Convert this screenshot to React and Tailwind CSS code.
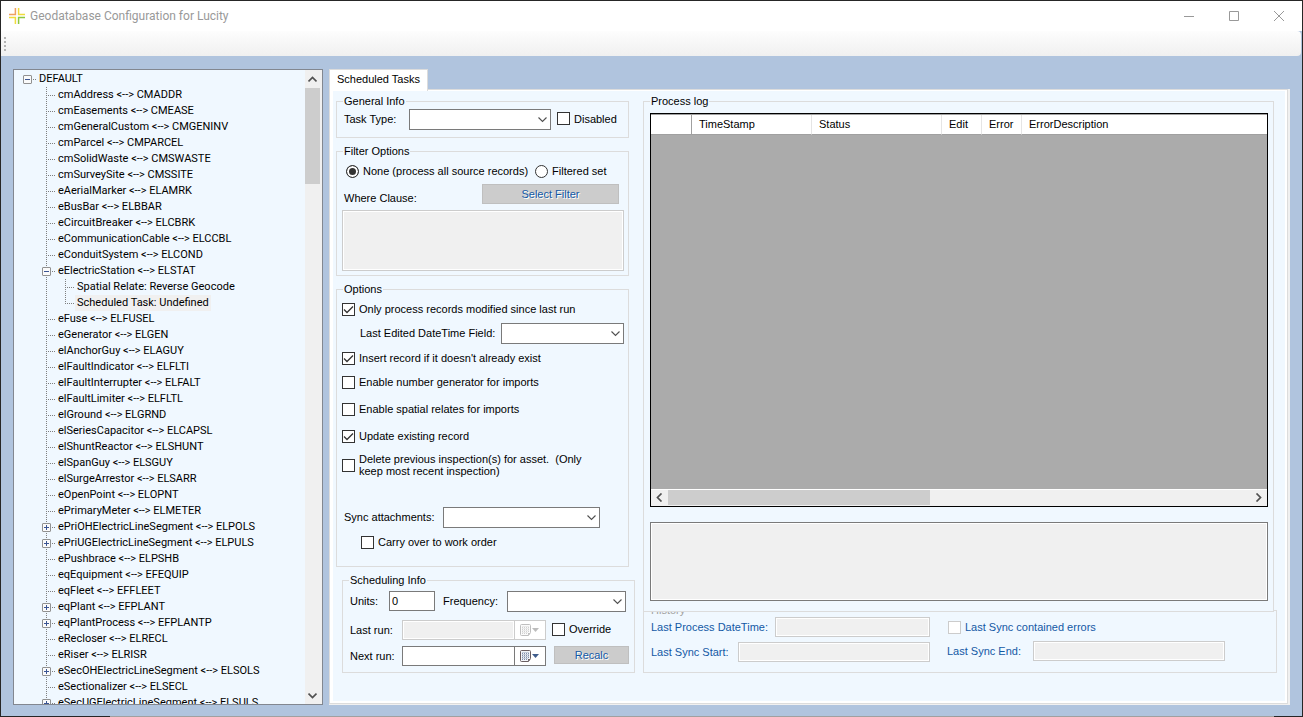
import React from 'react';

const TREE = [
  ['cmAddress <--> CMADDR'],
  ['cmEasements <--> CMEASE'],
  ['cmGeneralCustom <--> CMGENINV'],
  ['cmParcel <--> CMPARCEL'],
  ['cmSolidWaste <--> CMSWASTE'],
  ['cmSurveySite <--> CMSSITE'],
  ['eAerialMarker <--> ELAMRK'],
  ['eBusBar <--> ELBBAR'],
  ['eCircuitBreaker <--> ELCBRK'],
  ['eCommunicationCable <--> ELCCBL'],
  ['eConduitSystem <--> ELCOND'],
  ['eElectricStation <--> ELSTAT', 'open', ['Spatial Relate: Reverse Geocode', 'Scheduled Task: Undefined']],
  ['eFuse <--> ELFUSEL'],
  ['eGenerator <--> ELGEN'],
  ['elAnchorGuy <--> ELAGUY'],
  ['elFaultIndicator <--> ELFLTI'],
  ['elFaultInterrupter <--> ELFALT'],
  ['elFaultLimiter <--> ELFLTL'],
  ['elGround <--> ELGRND'],
  ['elSeriesCapacitor <--> ELCAPSL'],
  ['elShuntReactor <--> ELSHUNT'],
  ['elSpanGuy <--> ELSGUY'],
  ['elSurgeArrestor <--> ELSARR'],
  ['eOpenPoint <--> ELOPNT'],
  ['ePrimaryMeter <--> ELMETER'],
  ['ePriOHElectricLineSegment <--> ELPOLS', 'closed'],
  ['ePriUGElectricLineSegment <--> ELPULS', 'closed'],
  ['ePushbrace <--> ELPSHB'],
  ['eqEquipment <--> EFEQUIP'],
  ['eqFleet <--> EFFLEET'],
  ['eqPlant <--> EFPLANT', 'closed'],
  ['eqPlantProcess <--> EFPLANTP', 'closed'],
  ['eRecloser <--> ELRECL'],
  ['eRiser <--> ELRISR'],
  ['eSecOHElectricLineSegment <--> ELSOLS', 'closed'],
  ['eSectionalizer <--> ELSECL'],
  ['eSecUGElectricLineSegment <--> ELSULS', 'closed'],
];

function Dots({ up = true, down = true, across = true }) {
  return (
    <svg width="14" height="16" viewBox="0 0 14 16" className="shrink-0" fill="none" stroke="#7f7f7f" strokeDasharray="1 1" aria-hidden="true">
      {up && <path d="M4.5 0V8" />}
      {down && <path d="M4.5 8V16" />}
      {across && <path d="M4 8.5H14" />}
    </svg>
  );
}

function Toggle({ open, label, root }) {
  return (
    <button type="button" aria-label={(open ? 'Collapse ' : 'Expand ') + label} className="shrink-0">
      <svg width="14" height="16" viewBox="0 0 14 16" fill="none" className="block">
        {!root && <path d="M4.5 0V16" stroke="#7f7f7f" strokeDasharray="1 1" />}
        <path d="M10 8.5H14" stroke="#7f7f7f" strokeDasharray="1 1" />
        <rect x="0.5" y="4.5" width="8" height="8" rx="0.5" fill="#fafafa" stroke="#919191" />
        <path d="M2 8.5H7" stroke="#3b5593" />
        {!open && <path d="M4.5 6V11" stroke="#3b5593" />}
      </svg>
    </button>
  );
}

function Tree() {
  return (
    <ul className="min-w-0 flex-1 overflow-hidden pt-px pl-[9px] font-[Roboto,sans-serif] leading-4 whitespace-nowrap">
      <li>
        <div className="flex h-4">
          <Toggle open root label="DEFAULT" />
          <span className="px-0.5">DEFAULT</span>
        </div>
        <ul className="pl-[19px]">
          {TREE.map(([name, state, kids]) => (
            <li key={name}>
              <div className="flex h-4">
                {state ? <Toggle open={state === 'open'} label={name} /> : <Dots />}
                <span className="px-0.5">{name}</span>
              </div>
              {kids && (
                <ul>
                  {kids.map((kid, i) => (
                    <li key={kid} className="flex h-4">
                      <Dots across={false} />
                      <span className="w-[5px]" />
                      <Dots down={i < kids.length - 1} />
                      <span className={i === 1 ? 'bg-[#f0f0f0] px-0.5' : 'px-0.5'}>{kid}</span>
                    </li>
                  ))}
                </ul>
              )}
            </li>
          ))}
        </ul>
      </li>
    </ul>
  );
}

function Arrow({ d }) {
  return (
    <svg width="9" height="9" viewBox="0 0 9 9" fill="none" stroke="#505050" strokeWidth="1.7" aria-hidden="true">
      <path d={d} />
    </svg>
  );
}

function Group({ title, className = '', children }) {
  return (
    <fieldset className={'border border-[#dcdcdc] ' + className}>
      <legend className="ml-[6px] px-px leading-[13px]">{title}</legend>
      {children}
    </fieldset>
  );
}

function Check({ label, className = '', checked = false, disabled = false }) {
  return (
    <label className={'flex items-center gap-1 leading-3 ' + className}>
      <span className="relative size-[13px] shrink-0">
        <input
          type="checkbox"
          defaultChecked={checked}
          disabled={disabled}
          className="peer block size-[13px] appearance-none border border-[#333] bg-white disabled:border-[#ccc]"
        />
        <svg viewBox="0 0 13 13" className="pointer-events-none absolute inset-0 hidden size-[13px] peer-checked:block" fill="none" stroke="#333" strokeWidth="1.3" aria-hidden="true">
          <path d="M2 6.5L5 9.5L11 3.5" />
        </svg>
      </span>
      <span>{label}</span>
    </label>
  );
}

function Radio({ label, checked }) {
  return (
    <label className="flex items-center gap-1">
      <input
        type="radio"
        name="filter"
        defaultChecked={checked}
        className="size-[13px] shrink-0 appearance-none rounded-full border border-[#333] bg-white checked:bg-[#333] checked:shadow-[inset_0_0_0_2px_#fff]"
      />
      {label}
    </label>
  );
}

function Select({ id, className }) {
  return (
    <span className={'relative h-[21px] shrink-0 ' + className}>
      <select id={id} className="block h-full w-full appearance-none border border-[#7a7a7a] bg-white px-1">
        <option></option>
      </select>
      <svg width="9" height="6" viewBox="0 0 9 6" className="pointer-events-none absolute top-[8px] right-[4px]" fill="none" stroke="#505050" strokeWidth="1.1" aria-hidden="true">
        <path d="M0.5 0.5L4.5 4.5L8.5 0.5" />
      </svg>
    </span>
  );
}

function DatePick({ id, disabled = false }) {
  return (
    <span className={'flex h-5 w-36 shrink-0 border bg-white ' + (disabled ? 'border-[#ccc]' : 'border-[#7a7a7a]')}>
      <input id={id} disabled={disabled} className="m-px min-w-0 flex-1 bg-white px-0.5 disabled:bg-[#f0f0f0]" />
      <button
        type="button"
        aria-label="Open calendar"
        disabled={disabled}
        className={'w-[31px] border-l pl-1 ' + (disabled ? 'border-[#ccc]' : 'border-[#7a7a7a]')}
      >
        <svg width="22" height="14" viewBox="0 0 22 14" fill="none" className={disabled ? 'block opacity-40 grayscale' : 'block'}>
          <path d="M2.5 1.5H10.5Q11.5 1.5 11.5 2.5V9.5L9.5 12.5H2.5Q1.5 12.5 1.5 11.5V2.5Q1.5 1.5 2.5 1.5Z" fill="#f4f6fa" stroke="#6b5f62" />
          <path d="M3 4.5H10M3 6.5H10M3 8.5H10M3 10.5H9" stroke="#8290ad" strokeDasharray="1 1" />
          <path d="M3 3.5H10M3 5.5H10M3 7.5H10M3 9.5H9" stroke="#c5ccda" />
          <path d="M9 12.5V10H11.5Z" fill="#6b5f62" />
          <path d="M13 5H20L16.5 9Z" fill="#3f5d8c" />
        </svg>
      </button>
    </span>
  );
}

const flatButton = 'border border-[#bfbfbf] bg-[#ccc] text-center text-[#1359a5] [text-shadow:1px_1px_0_#fff]';
const dimField = 'border border-[#ccc] bg-[#f0f0f0] shadow-[inset_0_0_0_1px_#fff]';

function Titlebar() {
  return (
    <header className="flex h-[30px] shrink-0 items-center bg-white pl-2">
      <svg width="16" height="16" viewBox="0 0 16 16" fill="none" strokeWidth="1.5" aria-hidden="true">
        <path d="M0 6.4H6.4V0" stroke="#f0a060" />
        <path d="M9.6 0V6.4H16" stroke="#f0dc3c" />
        <path d="M0 9.6H6.4V16" stroke="#f0dc3c" />
        <path d="M9.6 16V9.6H16" stroke="#8cc63f" />
      </svg>
      <h1 className="ml-[5px] flex-1 font-[Roboto,sans-serif] text-xs text-[#999]">Geodatabase Configuration for Lucity</h1>
      <div className="flex text-[#999]">
        <button type="button" aria-label="Minimize" className="flex h-[30px] w-[45px] items-center justify-center">
          <svg width="10" height="10" viewBox="0 0 10 10" stroke="currentColor"><path d="M0 5.5H10" /></svg>
        </button>
        <button type="button" aria-label="Maximize" className="flex h-[30px] w-[45px] items-center justify-center">
          <svg width="10" height="10" viewBox="0 0 10 10" fill="none" stroke="currentColor"><path d="M0.5 0.5H9.5V9.5H0.5Z" /></svg>
        </button>
        <button type="button" aria-label="Close" className="flex h-[30px] w-[46px] items-center justify-center">
          <svg width="10" height="10" viewBox="0 0 10 10" stroke="currentColor"><path d="M0 0L10 10M10 0L0 10" /></svg>
        </button>
      </div>
    </header>
  );
}

function TaskForm() {
  return (
    <div className="flex w-[307px] shrink-0 flex-col gap-[7px]">
      <Group title="General Info" className="mr-[14px] h-[43px]">
        <div className="mt-px flex items-center pl-[7px]">
          <label htmlFor="task-type" className="w-[65px]">Task Type:</label>
          <Select id="task-type" className="w-[142px]" />
          <Check label="Disabled" className="mb-0.5 ml-[6px]" />
        </div>
      </Group>

      <Group title="Filter Options" className="mr-[14px] h-[131px]">
        <div className="mt-1 flex h-[18px] items-center gap-[7px] pl-[9px]">
          <Radio label="None (process all source records)" checked />
          <Radio label="Filtered set" />
        </div>
        <div className="mt-1 flex items-end justify-between pr-[9px] pl-[7px]">
          <label htmlFor="where" className="leading-3">Where Clause:</label>
          <button type="button" disabled className={'h-5 w-[137px] ' + flatButton}>Select Filter</button>
        </div>
        <div className="mt-[6px] pr-1 pl-[5px]">
          <textarea id="where" disabled className={'block h-[61px] w-full resize-none ' + dimField} />
        </div>
      </Group>

      <Group title="Options" className="mr-[14px] h-[284px]">
        <div className="flex flex-col pt-[6px] pr-1 pl-[5px]">
          <Check label="Only process records modified since last run" checked className="h-[14px]" />
          <div className="mt-[7px] flex items-center justify-between pl-[18px]">
            <label htmlFor="edited-field">Last Edited DateTime Field:</label>
            <Select id="edited-field" className="w-[123px]" />
          </div>
          <Check label="Insert record if it doesn't already exist" checked className="mt-[7px] h-[14px]" />
          <Check label="Enable number generator for imports" className="mt-[10px] h-[14px]" />
          <Check label="Enable spatial relates for imports" className="mt-[13px] h-[14px]" />
          <Check label="Update existing record" checked className="mt-[13px] h-[14px]" />
          <Check
            label={'Delete previous inspection(s) for asset.\u00a0 (Only keep most recent inspection)'}
            className="mt-[10px] h-6 w-[256px]"
          />
          <div className="mt-[30px] flex items-center pl-0.5">
            <label htmlFor="sync" className="w-[99px]">Sync attachments:</label>
            <Select id="sync" className="w-[157px]" />
          </div>
          <Check label="Carry over to work order" className="mt-[7px] ml-[19px] h-[14px]" />
        </div>
      </Group>

      <Group title="Scheduling Info" className="mr-2 ml-[6px] h-[99px]">
        <div className="mt-1 flex items-start pl-[7px] leading-5">
          <label htmlFor="units" className="w-[39px]">Units:</label>
          <input id="units" defaultValue="0" className="h-5 w-[46px] border border-[#7a7a7a] bg-white px-0.5" />
          <label htmlFor="frequency" className="w-[72px] pl-2">Frequency:</label>
          <Select id="frequency" className="w-[119px]" />
        </div>
        <div className="mt-2 flex items-center pl-[7px]">
          <label htmlFor="last-run" className="w-[52px]">Last run:</label>
          <DatePick id="last-run" disabled />
          <Check label="Override" className="mb-0.5 ml-[6px]" />
        </div>
        <div className="mt-[6px] flex items-start pl-[7px] leading-5">
          <label htmlFor="next-run" className="w-[52px]">Next run:</label>
          <DatePick id="next-run" />
          <button type="button" disabled className={'ml-2 h-[18px] w-[75px] leading-4 ' + flatButton}>Recalc</button>
        </div>
      </Group>
    </div>
  );
}

function LogPane() {
  const head = 'border-r border-[#e5e5e5] px-[7px] text-left font-normal';
  return (
    <div className="flex min-w-0 flex-1 flex-col">
      <Group title="Process log" className="relative z-10 mr-[11px] h-[517px] bg-[#f0f8ff]">
        <div className="mr-[5px] ml-[6px] mt-[5px] flex h-[394px] flex-col border border-black bg-[#ababab]">
          <table className="w-full table-fixed border-separate border-spacing-0 border-t border-[#a0a0a0] bg-white">
            <thead>
              <tr className="h-5 [&>th]:border-b [&>th]:border-b-[#a0a0a0]">
                <th className="w-[41px] border-r border-r-[#a0a0a0]" aria-label="Row" />
                <th className={'w-[120px] ' + head}>TimeStamp</th>
                <th className={'w-[130px] ' + head}>Status</th>
                <th className={'w-10 ' + head}>Edit</th>
                <th className={'w-10 ' + head}>Error</th>
                <th className="px-[7px] text-left font-normal">ErrorDescription</th>
              </tr>
            </thead>
          </table>
          <div className="mt-auto flex h-[17px] items-center border-y border-t-white border-b-[#f0f0f0] bg-[#f0f0f0]">
            <span className="flex w-[17px] justify-center"><Arrow d="M6.5 0.5L2.5 4.5L6.5 8.5" /></span>
            <span className="h-full w-[262px] bg-[#cdcdcd]" />
            <span className="ml-auto flex w-[17px] justify-center"><Arrow d="M2.5 0.5L6.5 4.5L2.5 8.5" /></span>
          </div>
        </div>
        <div className="mr-[5px] ml-[6px] mt-[15px]">
          <textarea
            aria-label="Log details"
            readOnly
            className="block h-[79px] w-full resize-none border border-[#7a7a7a] bg-[#f0f0f0] shadow-[inset_0_0_0_1px_#fff]"
          />
        </div>
      </Group>

      <Group title={<span className="text-[#a0a0a0]">History</span>} className="-mt-2 mr-2 h-[69px]">
        <div className="flex gap-[17px] pl-[7px] text-[#1359a5]">
          <div className="flex w-[279px] flex-col gap-[5px]">
            <div className="flex items-center justify-between">
              <label htmlFor="last-process">Last Process DateTime:</label>
              <input id="last-process" disabled className={'h-5 w-[155px] ' + dimField} />
            </div>
            <div className="flex items-center justify-between">
              <label htmlFor="sync-start">Last Sync Start:</label>
              <input id="sync-start" disabled className={'h-5 w-48 ' + dimField} />
            </div>
          </div>
          <div className="flex flex-col gap-1">
            <Check label="Last Sync contained errors" disabled className="ml-px h-5" />
            <div className="flex items-center">
              <label htmlFor="sync-end" className="w-[86px]">Last Sync End:</label>
              <input id="sync-end" disabled className={'h-5 w-48 ' + dimField} />
            </div>
          </div>
        </div>
      </Group>
    </div>
  );
}

export default function App() {
  return (
    <div className="flex h-screen flex-col overflow-hidden border-x border-t border-[#262626] bg-[#b0c4de] font-['Liberation_Sans',Arial,sans-serif] text-[11px] leading-[13px] text-black">
      <Titlebar />
      <div className="mr-px flex h-[25px] shrink-0 items-center rounded-r-sm bg-linear-to-b from-[#fdfdfd] to-[#f0f0f0] pl-[3px]">
        <svg width="2" height="14" viewBox="0 0 2 14" fill="#b4b4b4" aria-hidden="true">
          <path d="M0 0h2v2H0zM0 4h2v2H0zM0 8h2v2H0zM0 12h2v2H0z" />
        </svg>
      </div>

      <main className="flex min-h-0 flex-1 gap-[6px] px-3 pt-[13px] pb-[11px]">
        <nav aria-label="Geodatabase" className="flex w-[310px] shrink-0 border border-[#828790] bg-[#f0f8ff]">
          <Tree />
          <div className="flex w-[17px] flex-col items-center bg-[#f0f0f0] pr-0.5">
            <span className="flex h-[18px] items-center"><Arrow d="M0.5 6.5L4.5 2.5L8.5 6.5" /></span>
            <span className="h-24 w-[15px] bg-[#cdcdcd]" />
            <span className="mt-auto flex h-[18px] items-center"><Arrow d="M0.5 2.5L4.5 6.5L8.5 2.5" /></span>
          </div>
        </nav>

        <section className="flex min-w-0 flex-1 flex-col">
          <div role="tablist" className="flex h-5">
            <button type="button" role="tab" aria-selected="true" className="relative z-10 -mb-0.5 border-x border-t border-[#dcdcdc] bg-white px-[7px] pb-0.5">
              Scheduled Tasks
            </button>
          </div>
          <div className="min-h-0 flex-1 border-r-2 border-b border-[#f0f0f0]">
            <div className="h-full border border-[#dcdcdc] bg-white pt-px pr-0.5 pb-0.5 pl-[3px]">
              <div className="flex h-full bg-[#f0f8ff] pt-1 pl-[3px]">
                <TaskForm />
                <LogPane />
              </div>
            </div>
          </div>
        </section>
      </main>
      <footer className="flex h-px shrink-0 bg-[#a0a0a0]">
        <span className="w-[109px] bg-[#262626]" />
        <span className="ml-auto w-7 bg-[#262626]" />
      </footer>
    </div>
  );
}
